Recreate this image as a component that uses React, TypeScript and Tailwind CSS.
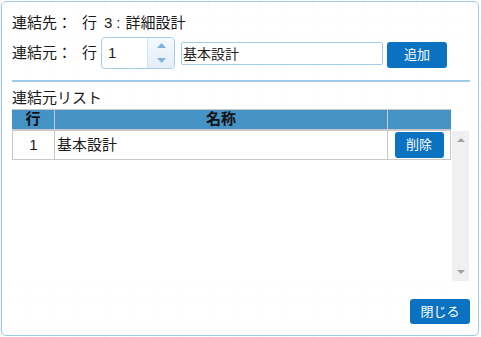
const FONT = {
  fontFamily: '"Liberation Sans", "Noto Sans CJK JP", sans-serif',
};

const Spinner = () => {
  return (
    <div className="flex h-[32px] w-[74px] rounded-[4px] border border-[#a3cde6] bg-white overflow-hidden">
      <div className="flex-1 flex items-center pl-[6px] text-[15px] text-[#222]">1</div>
      <div className="w-[27px] flex flex-col border-l border-[#cfe3f1] bg-gradient-to-b from-[#f4f9fd] to-[#e3eef8]">
        <div className="flex-1 flex items-center justify-center">
          <svg width="9" height="5" viewBox="0 0 9 5">
            <path d="M0 5 L4.5 0 L9 5 Z" fill="#7db3dc" />
          </svg>
        </div>
        <div className="flex-1 flex items-center justify-center">
          <svg width="9" height="5" viewBox="0 0 9 5">
            <path d="M0 0 L4.5 5 L9 0 Z" fill="#7db3dc" />
          </svg>
        </div>
      </div>
    </div>
  );
};

const App = () => {
  return (
    <div
      className="w-[481px] h-[337px] overflow-hidden bg-white bg-[linear-gradient(to_right,#f0f3f6_1px,transparent_1px),linear-gradient(to_bottom,#f0f3f6_1px,transparent_1px)] bg-size-[26px_22px] bg-position-[0px_17px]"
      style={FONT}
    >
      <div className="ml-px mt-px w-[478px] h-[335px] rounded-[5px] border border-[#9fcbe5] bg-white/85 flex flex-col pl-[10px] pr-[8px] text-[#1a1a1a]">
        {/* 連結先 */}
        <div className="mt-[10px] h-[22px] flex items-center text-[15px]">
          <span className="w-[70px]">連結先：</span>
          <span>行</span>
          <span className="ml-[7px]">3</span>
          <span className="ml-[4px]">:</span>
          <span className="ml-[5px]">詳細設計</span>
        </div>

        {/* 連結元 */}
        <div className="mt-[3px] h-[32px] flex items-center">
          <span className="w-[70px] text-[15px]">連結元：</span>
          <span className="w-[15px] text-[15px]">行</span>
          <div className="ml-[4px]">
            <Spinner />
          </div>
          <input
            className="ml-[6px] w-[202px] h-[23px] rounded-[2px] border border-[#a3cde6] bg-white px-[1px] text-[14px] text-[#222] outline-none"
            style={FONT}
            defaultValue="基本設計"
          />
          <button className="ml-[4px] mt-[3px] w-[60px] h-[26px] rounded-[3px] bg-[#0b72c2] text-white text-[13px]">
            追加
          </button>
        </div>

        <div className="mt-[11px] h-[2px] bg-[#9fcbe5]" />

        <div className="mt-[6px] h-[20px] leading-[20px] text-[15px]">連結元リスト</div>

        <div className="mt-px w-[439px] h-[22px] flex bg-[#4592c5] border-t border-[#c8c8c8] border-b-2 border-b-[#c8c8c8] text-[15px] font-bold text-[#111]">
          <div className="w-[43px] flex items-center justify-center border-r border-[#c8c8c8]">行</div>
          <div className="w-[333px] flex items-center justify-center border-r border-[#c8c8c8]">名称</div>
          <div className="flex-1" />
        </div>

        <div className="h-[150px] w-[457px] flex bg-white">
          <div className="w-[440px]">
            <div className="h-[29px] flex border-l border-r border-b border-[#c8c8c8] w-[439px] text-[15px]">
              <div className="w-[42px] flex items-center justify-center border-r border-[#c8c8c8]">1</div>
              <div className="w-[333px] flex items-center pl-[2px] border-r border-[#c8c8c8]">基本設計</div>
              <div className="flex-1 flex items-center justify-center">
                <button className="w-[49px] h-[26px] rounded-[3px] bg-[#0b72c2] text-white text-[13px]">
                  削除
                </button>
              </div>
            </div>
          </div>
          <div className="w-[17px] bg-[#f0f0f0] flex flex-col items-center justify-between py-[7px]">
            <svg width="8" height="4" viewBox="0 0 8 4">
              <path d="M0 4 L4 0 L8 4 Z" fill="#a3a3a3" />
            </svg>
            <svg width="8" height="4" viewBox="0 0 8 4">
              <path d="M0 0 L4 4 L8 0 Z" fill="#a3a3a3" />
            </svg>
          </div>
        </div>

        <div className="mt-[18px] flex justify-end">
          <button className="w-[60px] h-[25px] rounded-[3px] bg-[#0b72c2] text-white text-[13px]">
            閉じる
          </button>
        </div>
      </div>
    </div>
  );
};

export default App;
